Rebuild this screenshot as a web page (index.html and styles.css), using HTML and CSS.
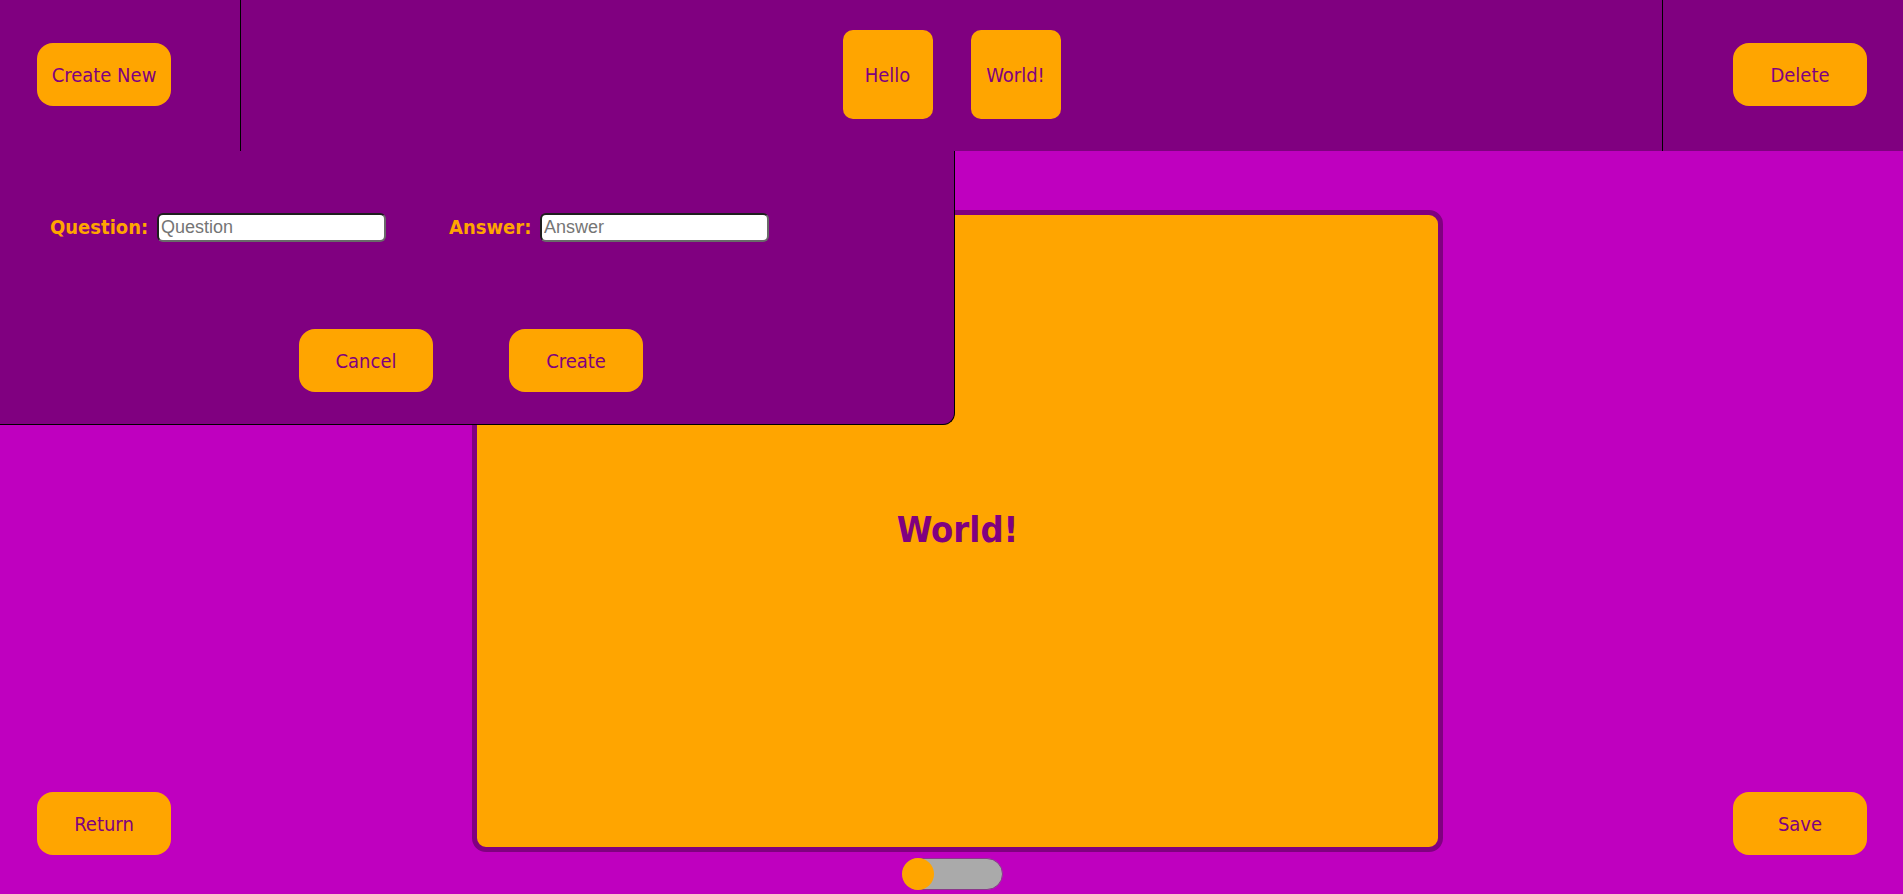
FILE: index.html
```html
<!DOCTYPE html>
<html>
<head>
<meta charset="utf-8">
<link rel="stylesheet" href="styles.css">
</head>
<body>
<header class="topbar">
  <div class="side side-left">
    <button class="btn">Create New</button>
  </div>
  <div class="deck-list">
    <div class="mini-card">Hello</div>
    <div class="mini-card">World!</div>
  </div>
  <div class="side side-right">
    <button class="btn">Delete</button>
  </div>
</header>
<main class="stage">
  <div class="corner corner-left">
    <button class="btn">Return</button>
  </div>
  <div class="card"><span class="card-text">World!</span></div>
  <div class="corner corner-right">
    <button class="btn">Save</button>
  </div>
  <div class="toggle"><span class="knob"></span></div>

  <div class="popup">
    <div class="fields">
      <label class="field field-q"><span class="field-label">Question:</span><input class="field-input" type="text" placeholder="Question"></label>
      <label class="field field-a"><span class="field-label">Answer:</span><input class="field-input" type="text" placeholder="Answer"></label>
    </div>
    <div class="actions">
      <button class="btn">Cancel</button>
      <button class="btn">Create</button>
    </div>
  </div>
</main>
</body>
</html>
```
FILE: styles.css
```css
* { box-sizing: border-box; }
html, body {
  margin: 0;
  height: 100%;
}
body {
  background: #bf00bf;
  font-family: "Liberation Sans Narrow", "DejaVu Sans Condensed", "Liberation Sans", sans-serif;
  overflow: hidden;
  display: flex;
  flex-direction: column;
}
.btn {
  width: 134px;
  height: 63px;
  background: #ffa500;
  color: #800080;
  border: none;
  border-radius: 16px;
  font-family: inherit;
  font-size: 20px;
  padding: 0;
  cursor: pointer;
}
.topbar {
  height: 151px;
  flex: none;
  background: #800080;
  display: grid;
  grid-template-columns: 241px 1fr 241px;
}
.side {
  display: flex;
  align-items: center;
  padding-bottom: 2px;
}
.side-left {
  border-right: 1px solid #000;
  padding-left: 37px;
}
.side-right {
  border-left: 1px solid #000;
  justify-content: flex-end;
  padding-right: 36px;
}
.deck-list {
  display: flex;
  align-items: center;
  justify-content: center;
  gap: 38px;
  padding-bottom: 2px;
}
.mini-card {
  width: 90px;
  height: 89px;
  border-radius: 10px;
  background: #ffa500;
  color: #800080;
  font-size: 20px;
  display: flex;
  align-items: center;
  justify-content: center;
}
.stage {
  flex: 1;
  position: relative;
  display: grid;
  grid-template-columns: 472px 971px 1fr;
  grid-template-rows: 1fr auto;
  padding-top: 59px;
  padding-bottom: 4px;
}
.corner {
  grid-row: 1 / span 2;
  align-self: end;
  padding-bottom: 35px;
  display: flex;
}
.corner-left {
  grid-column: 1;
  padding-left: 37px;
}
.corner-right {
  grid-column: 3;
  justify-content: flex-end;
  padding-right: 36px;
}
.card {
  grid-column: 2;
  grid-row: 1;
  height: 642px;
  background: #ffa500;
  border: 5px solid #800080;
  border-radius: 14px;
  display: flex;
  align-items: center;
  justify-content: center;
}
.card-text {
  color: #800080;
  font-weight: bold;
  font-size: 36px;
  margin-bottom: 4px;
}
.toggle {
  grid-column: 2;
  grid-row: 2;
  justify-self: center;
  margin-top: 6px;
  margin-right: 10px;
  width: 101px;
  height: 32px;
  border-radius: 16px;
  background: #aaaaaa;
  border: 1px solid #8a3a8a;
  position: relative;
}
.knob {
  position: absolute;
  left: -1px;
  top: -1px;
  width: 32px;
  height: 32px;
  border-radius: 50%;
  background: #ffa500;
}
.popup {
  position: absolute;
  left: 0;
  top: 0;
  width: 955px;
  height: 274px;
  background: #800080;
  border-right: 1px solid #000;
  border-bottom: 1px solid #000;
  border-bottom-right-radius: 12px;
  padding: 61px 0 0 50px;
  display: flex;
  flex-direction: column;
}
.fields {
  display: flex;
  gap: 63px;
  align-items: center;
  height: 30px;
}
.field {
  display: flex;
  align-items: center;
  gap: 7px;
}
.field-q { width: 336px; }
.field-a { width: 320px; }
.field-label {
  color: #ffa500;
  font-weight: bold;
  font-size: 20px;
  flex: 1;
  white-space: nowrap;
}
.field-input {
  width: 229px;
  flex: none;
  height: 29px;
  border-radius: 6px;
  border: 2px solid;
  border-color: #1e1e1e #6a6a6a #6a6a6a #1e1e1e;
  background: #fff;
  font-family: "Liberation Sans", Arial, sans-serif;
  font-size: 18px;
  padding: 0 2px;
  color: #000;
}
.field-input::placeholder { color: #757575; }
.actions {
  display: flex;
  gap: 76px;
  margin-top: 87px;
  margin-left: 249px;
}
```
